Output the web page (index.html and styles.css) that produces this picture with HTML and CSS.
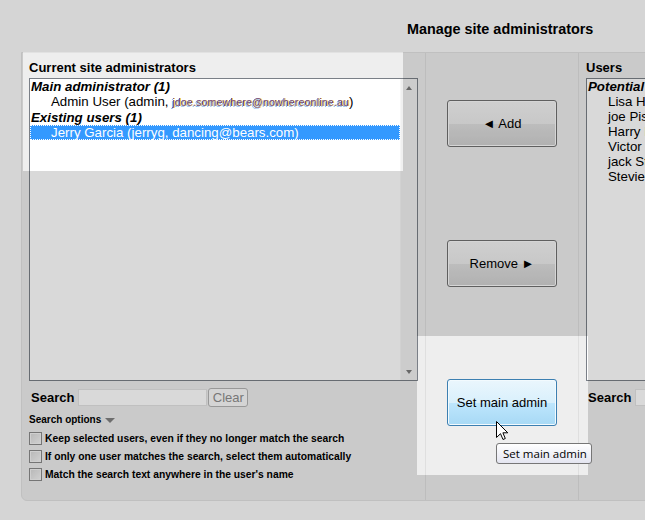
FILE: index.html
```html
<!DOCTYPE html>
<html>
<head>
<meta charset="utf-8">
<link rel="stylesheet" href="styles.css">
</head>
<body>
<div class="page">
  <h2 class="title">Manage site administrators</h2>
  <div class="panel">
    <div class="col col-left">
      <label class="col-label">Current site administrators</label>
      <div class="listbox">
        <div class="list-items">
          <div class="grp">Main administrator (1)</div>
          <div class="opt">Admin User (admin, <span class="blur">jdoe.somewhere@nowhereonline.au</span>)</div>
          <div class="grp">Existing users (1)</div>
          <div class="opt selected">Jerry Garcia (jerryg, dancing@bears.com)</div>
        </div>
        <div class="scrollbar"><span class="arr up"></span><span class="arr down"></span></div>
      </div>
      <div class="search-row">
        <span class="search-label">Search</span><input class="search-input" type="text"><button class="clear-btn" disabled>Clear</button>
      </div>
      <div class="options">
        <div class="options-title">Search options <span class="tri-down"></span></div>
        <label class="chk"><input type="checkbox" class="box">Keep selected users, even if they no longer match the search</label>
        <label class="chk"><input type="checkbox" class="box">If only one user matches the search, select them automatically</label>
        <label class="chk"><input type="checkbox" class="box">Match the search text anywhere in the user's name</label>
      </div>
    </div>
    <div class="col col-mid">
      <button class="btn btn-add">◄ Add</button>
      <button class="btn btn-remove">Remove ►</button>
      <button class="btn btn-main hover">Set main admin</button>
    </div>
    <div class="col col-right">
      <label class="col-label">Users</label>
      <div class="listbox listbox-wide">
        <div class="list-items">
          <div class="grp">Potential users (6)</div>
          <div class="opt">Lisa Harrison (lisah, lisa@example.com)</div>
          <div class="opt">joe Pistone (joep, joe@example.com)</div>
          <div class="opt">Harry Lime (harryl, harry@example.com)</div>
          <div class="opt">Victor Sullivan (victors, victor@example.com)</div>
          <div class="opt">jack Stevens (jacks, jack@example.com)</div>
          <div class="opt">Stevie Ray (stevier, stevie@example.com)</div>
        </div>
      </div>
      <div class="search-row">
        <span class="search-label">Search</span><input class="search-input" type="text">
      </div>
    </div>
  </div>
</div>
<svg class="dim" width="645" height="520" viewBox="0 0 645 520">
  <path fill-rule="evenodd" fill="rgba(0,0,0,0.15)" d="M0 0H645V520H0Z M23 52V171H403V52Z M417 336V475H588V336Z"/>
</svg>
<div class="tooltip">Set main admin</div>
<svg class="cursor" width="13" height="20" viewBox="0 0 13 20">
  <path d="M0.5 0.5 L0.5 16.5 L4.5 12.7 L7 18.5 L9.3 17.5 L6.9 11.8 L11.8 11.8 Z" fill="#fff" stroke="#000" stroke-width="1" stroke-linejoin="miter"/>
</svg>
</body>
</html>
```
FILE: styles.css
```css
html, body {
  margin: 0;
  padding: 0;
}
body {
  width: 645px;
  height: 520px;
  overflow: hidden;
  position: relative;
  background: #fbfbfb;
  font-family: "Liberation Sans", Arial, sans-serif;
  color: #000;
}
.page {
  width: 1000px;
}
.title {
  margin: 0;
  height: 52px;
  box-sizing: border-box;
  padding: 21px 0 0 407px;
  font-size: 14.4px;
  line-height: 17px;
  font-weight: bold;
}
.panel {
  margin-left: 21px;
  width: 900px;
  height: 449px;
  box-sizing: border-box;
  display: flex;
  background: #eeeeee;
  border: 1px solid #e2e2e2;
  border-radius: 0 0 0 6px;
}
.col {
  box-sizing: border-box;
}
.col-left {
  flex: 0 0 403px;
  width: 403px;
  padding: 7px 7px 0 7px;
}
.col-mid {
  flex: 0 0 153px;
  width: 153px;
  border-left: 1px solid #dfdfdf;
  display: flex;
  flex-direction: column;
  align-items: center;
  padding-top: 47px;
}
.col-right {
  flex: 1 1 auto;
  min-width: 0;
  border-left: 1px solid #dfdfdf;
  padding: 7px 0 0 7px;
}
.col-label {
  display: block;
  font-size: 13px;
  font-weight: bold;
  line-height: 15px;
  height: 15px;
  margin-bottom: 3px;
}
.listbox {
  display: flex;
  width: 389px;
  height: 303px;
  box-sizing: border-box;
  border: 1px solid #7a7f87;
  background: #fff;
}
.listbox-wide {
  width: 400px;
}
.list-items {
  flex: 1;
  min-width: 0;
  font-size: 13.3px;
  line-height: 15px;
}
.grp {
  font-weight: bold;
  font-style: italic;
  padding-left: 1px;
  white-space: nowrap;
}
.opt {
  padding-left: 21px;
  white-space: nowrap;
}
.selected {
  background: #3399ff;
  color: #fff;
  outline: 1px dotted #ffffff;
  outline-offset: -1px;
}
.blur {
  font-size: 10.5px;
  letter-spacing: 0.2px;
  color: #6a3f86;
  text-shadow: 1px 0 0 #e9c95a, -1px 1px 0 #86b8e8;
  filter: blur(0.35px);
}
.scrollbar {
  flex: 0 0 17px;
  width: 17px;
  background: #f0f0f0;
  border-left: 1px solid #f6f6f6;
  box-sizing: border-box;
  display: flex;
  flex-direction: column;
  justify-content: space-between;
  align-items: center;
  padding: 7px 0 6px 0;
}
.arr {
  width: 0;
  height: 0;
  border-left: 3.5px solid transparent;
  border-right: 3.5px solid transparent;
}
.arr.up {
  border-bottom: 4px solid #7a7a7a;
}
.arr.down {
  border-top: 4px solid #7a7a7a;
}
.search-row {
  display: flex;
  align-items: center;
  height: 19px;
  margin-top: 7px;
}
.search-label {
  font-size: 13px;
  font-weight: bold;
  margin-left: 2px;
  margin-right: 4px;
}
.search-input {
  width: 129px;
  height: 17px;
  box-sizing: border-box;
  margin: 0;
  padding: 0;
  border: 1px solid #e2e2e2;
  background: #fff;
}
.clear-btn {
  margin: 0 0 0 1px;
  padding: 0;
  width: 40px;
  height: 19px;
  box-sizing: border-box;
  border: 1px solid #b3b3b3;
  border-radius: 3px;
  background: #fafafa;
  color: #8c8c8c;
  font-family: "Liberation Sans", Arial, sans-serif;
  font-size: 13px;
}
.options {
  margin-top: 7px;
}
.options-title {
  font-size: 10px;
  font-weight: bold;
  line-height: 12px;
  margin-bottom: 3px;
  display: flex;
  align-items: center;
}
.tri-down {
  display: inline-block;
  margin-left: 4px;
  width: 0;
  height: 0;
  border-left: 5px solid transparent;
  border-right: 5px solid transparent;
  border-top: 5px solid #808080;
  margin-top: 1px;
}
.chk {
  display: flex;
  align-items: center;
  height: 18px;
  font-size: 10.3px;
  font-weight: bold;
  white-space: nowrap;
}
.box {
  -webkit-appearance: none;
  appearance: none;
  margin: 0 3px 0 0;
  width: 13px;
  height: 13px;
  box-sizing: border-box;
  border: 1px solid #8a8a8a;
  background: linear-gradient(to bottom right, #d8d8d8, #f6f6f6);
  box-shadow: inset 0 0 0 1px #f4f4f4;
}
.btn {
  width: 110px;
  height: 47px;
  flex: 0 0 47px;
  box-sizing: border-box;
  border: 1px solid #707070;
  border-radius: 3px;
  background: linear-gradient(to bottom, #f3f3f3 0%, #ececec 50%, #dedede 51%, #d0d0d0 100%);
  box-shadow: inset 0 0 0 1px #fbfbfb;
  font-family: "Liberation Sans", Arial, sans-serif;
  font-size: 13px;
  color: #000;
  padding: 0;
}
.btn-remove {
  margin-top: 93px;
}
.btn-main {
  margin-top: 92px;
}
.btn.hover {
  border-color: #3c7fb1;
  background: linear-gradient(to bottom, #eaf6fd 0%, #d9f0fc 50%, #bee6fd 51%, #a7d9f5 100%);
  box-shadow: inset 0 0 0 1px #f2fafe;
}
.dim {
  position: absolute;
  left: 0;
  top: 0;
  pointer-events: none;
}
.tooltip {
  position: absolute;
  left: 496px;
  top: 443px;
  width: 96px;
  height: 21px;
  box-sizing: border-box;
  border: 1px solid #767676;
  border-radius: 3px;
  background: linear-gradient(to bottom, #ffffff, #e4e5f0);
  font-family: "Open Sans", "Liberation Sans", sans-serif;
  font-size: 11.5px;
  line-height: 19px;
  padding-left: 6px;
  color: #000;
  white-space: nowrap;
}
.cursor {
  position: absolute;
  left: 496px;
  top: 421px;
}
```
